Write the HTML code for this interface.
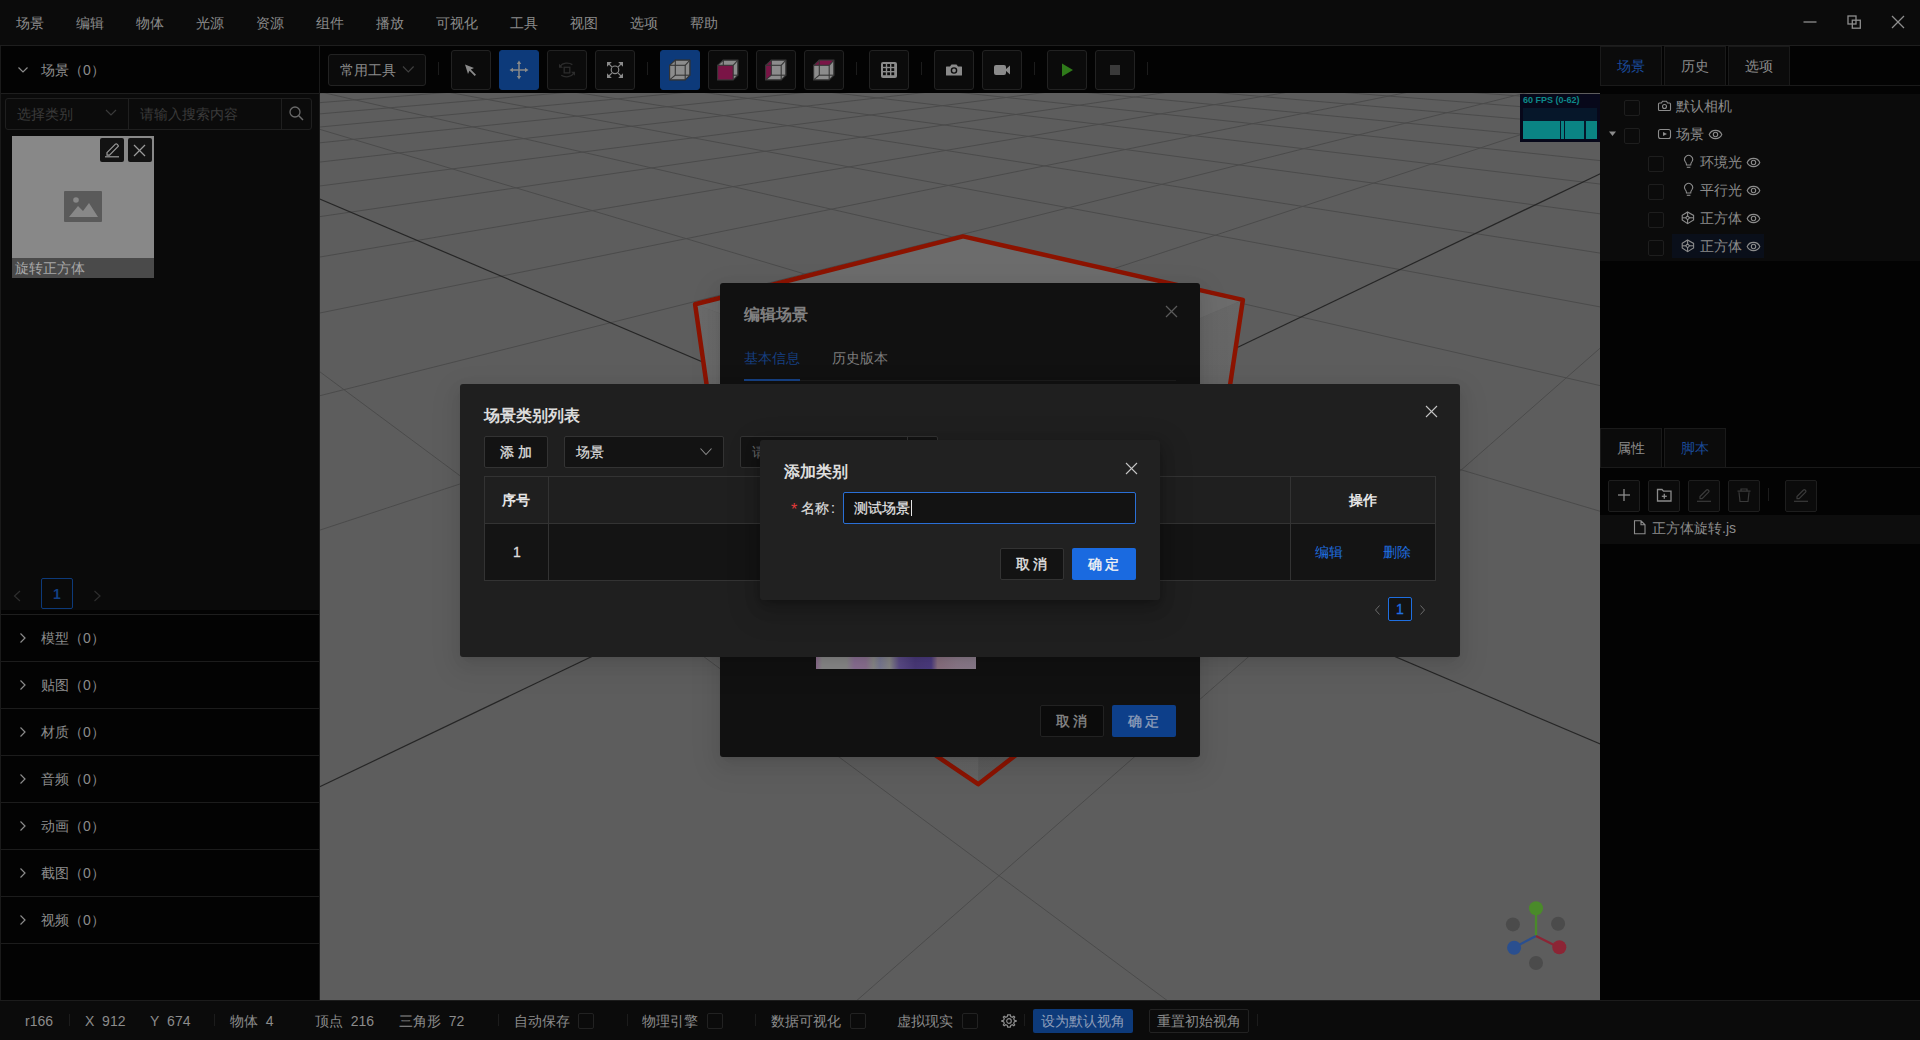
<!DOCTYPE html><html><head><meta charset="utf-8"><style>
*{margin:0;padding:0;box-sizing:border-box}
html,body{width:1920px;height:1040px;overflow:hidden;background:#0b0b0b;font-family:"Liberation Sans",sans-serif;font-size:14px;color:#8c8c8c}
.a{position:absolute}
.t{position:absolute;white-space:nowrap;line-height:16px}
.btn{position:absolute;width:40px;height:40px;top:50px;background:#0b0b0b;border:1px solid #222;border-radius:3px}
.btn svg{position:absolute;left:0;top:0}
.sep{position:absolute;width:1px;height:13px;top:62px;background:#1c1c1c}
.blue{background:#0d3a7a;border-color:#0d3a7a}
</style></head><body>
<div class="a" style="left:0;top:0;width:1920px;height:45px;background:#0b0b0b"></div>
<div class="a" style="left:0;top:45px;width:1920px;height:1px;background:#1e1e1e"></div>
<div class="t" style="left:16px;top:15px">场景</div>
<div class="t" style="left:76px;top:15px">编辑</div>
<div class="t" style="left:136px;top:15px">物体</div>
<div class="t" style="left:196px;top:15px">光源</div>
<div class="t" style="left:256px;top:15px">资源</div>
<div class="t" style="left:316px;top:15px">组件</div>
<div class="t" style="left:376px;top:15px">播放</div>
<div class="t" style="left:436px;top:15px">可视化</div>
<div class="t" style="left:510px;top:15px">工具</div>
<div class="t" style="left:570px;top:15px">视图</div>
<div class="t" style="left:630px;top:15px">选项</div>
<div class="t" style="left:690px;top:15px">帮助</div>
<svg class="a" style="left:1790px;top:0" width="130" height="45"><g stroke="#8e8e8e" stroke-width="1.3" fill="none"><line x1="13.5" y1="22" x2="26.5" y2="22"/><rect x="58" y="16" width="8" height="8"/><rect x="62.3" y="20.2" width="8" height="8"/><line x1="102" y1="16" x2="114" y2="28"/><line x1="114" y1="16" x2="102" y2="28"/></g></svg>
<div class="a" style="left:0;top:46px;width:320px;height:954px;background:#030303;border-left:1px solid #1a1a1a;border-right:1px solid #1a1a1a"></div>
<svg class="a" style="left:0;top:46px" width="40" height="47"><polyline points="18.5,21.5 23,26 27.5,21.5" stroke="#8c8c8c" stroke-width="1.2" fill="none"/></svg>
<div class="t" style="left:41px;top:62px">场景（0）</div>
<div class="a" style="left:1px;top:93px;width:318px;height:1px;background:#1e1e1e"></div>
<div class="a" style="left:1px;top:94px;width:318px;height:520px;background:#0a0a0a"></div>
<div class="a" style="left:5px;top:98px;width:307px;height:32px;border:1px solid #1f1f1f;border-radius:3px;background:#0b0b0b"></div>
<div class="a" style="left:128px;top:99px;width:1px;height:30px;background:#1f1f1f"></div>
<div class="a" style="left:281px;top:99px;width:1px;height:30px;background:#1f1f1f"></div>
<div class="t" style="left:17px;top:106px;color:#3a3a3a">选择类别</div>
<svg class="a" style="left:100px;top:100px" width="24" height="28"><polyline points="6,10 11,15 16,10" stroke="#3a3a3a" stroke-width="1.2" fill="none"/></svg>
<div class="t" style="left:140px;top:106px;color:#3a3a3a">请输入搜索内容</div>
<svg class="a" style="left:282px;top:99px" width="30" height="30"><circle cx="13" cy="13" r="5" stroke="#6a6a6a" stroke-width="1.3" fill="none"/><line x1="16.8" y1="16.8" x2="21" y2="21" stroke="#6a6a6a" stroke-width="1.5"/></svg>
<div class="a" style="left:12px;top:136px;width:142px;height:122px;background:#888"></div>
<div class="a" style="left:12px;top:258px;width:142px;height:20px;background:#4a4a4a"></div>
<div class="t" style="left:15px;top:260px;color:#a8a8a8">旋转正方体</div>
<svg class="a" style="left:64px;top:191px" width="39" height="31"><rect x="0" y="0" width="38" height="31" rx="1" fill="#5a5a5a"/><circle cx="12" cy="9" r="2.8" fill="#888"/><polygon points="5,26 14,15 19,20 25,12 34,26" fill="#888"/></svg>
<div class="a" style="left:100px;top:138px;width:24px;height:24px;background:#131313;border-radius:2px"></div>
<div class="a" style="left:128px;top:138px;width:24px;height:24px;background:#131313;border-radius:2px"></div>
<svg class="a" style="left:100px;top:138px" width="52" height="24"><g stroke="#9a9a9a" stroke-width="1.2" fill="none"><path d="M7,14.6 L15.4,6.2 Q16.2,5.4 17,6.2 L17.9,7.1 Q18.7,7.9 17.9,8.7 L9.5,17.1 L7,17.1 Z"/><line x1="5" y1="18.8" x2="19" y2="18.8"/><line x1="34" y1="7" x2="45" y2="18"/><line x1="45" y1="7" x2="34" y2="18"/></g></svg>
<svg class="a" style="left:8px;top:585px" width="100" height="20"><g stroke="#2e2e2e" stroke-width="1.2" fill="none"><polyline points="12,6 6.5,11 12,16"/><polyline points="86.5,6 92,11 86.5,16"/></g></svg>
<div class="a" style="left:41px;top:578px;width:32px;height:31px;border:1px solid #0d3a7a;border-radius:2px"></div>
<div class="t" style="left:53px;top:586px;color:#123f84;font-weight:bold">1</div>
<div class="a" style="left:1px;top:610px;width:318px;height:4px;background:#030303"></div>
<div class="a" style="left:1px;top:614px;width:318px;height:1px;background:#1e1e1e"></div>
<svg class="a" style="left:0;top:615px" width="40" height="46"><polyline points="20.5,18.5 25,23 20.5,27.5" stroke="#8c8c8c" stroke-width="1.2" fill="none"/></svg>
<div class="t" style="left:41px;top:630px">模型（0）</div>
<div class="a" style="left:1px;top:661px;width:318px;height:1px;background:#1c1c1c"></div>
<svg class="a" style="left:0;top:662px" width="40" height="46"><polyline points="20.5,18.5 25,23 20.5,27.5" stroke="#8c8c8c" stroke-width="1.2" fill="none"/></svg>
<div class="t" style="left:41px;top:677px">贴图（0）</div>
<div class="a" style="left:1px;top:708px;width:318px;height:1px;background:#1c1c1c"></div>
<svg class="a" style="left:0;top:709px" width="40" height="46"><polyline points="20.5,18.5 25,23 20.5,27.5" stroke="#8c8c8c" stroke-width="1.2" fill="none"/></svg>
<div class="t" style="left:41px;top:724px">材质（0）</div>
<div class="a" style="left:1px;top:755px;width:318px;height:1px;background:#1c1c1c"></div>
<svg class="a" style="left:0;top:756px" width="40" height="46"><polyline points="20.5,18.5 25,23 20.5,27.5" stroke="#8c8c8c" stroke-width="1.2" fill="none"/></svg>
<div class="t" style="left:41px;top:771px">音频（0）</div>
<div class="a" style="left:1px;top:802px;width:318px;height:1px;background:#1c1c1c"></div>
<svg class="a" style="left:0;top:803px" width="40" height="46"><polyline points="20.5,18.5 25,23 20.5,27.5" stroke="#8c8c8c" stroke-width="1.2" fill="none"/></svg>
<div class="t" style="left:41px;top:818px">动画（0）</div>
<div class="a" style="left:1px;top:849px;width:318px;height:1px;background:#1c1c1c"></div>
<svg class="a" style="left:0;top:850px" width="40" height="46"><polyline points="20.5,18.5 25,23 20.5,27.5" stroke="#8c8c8c" stroke-width="1.2" fill="none"/></svg>
<div class="t" style="left:41px;top:865px">截图（0）</div>
<div class="a" style="left:1px;top:896px;width:318px;height:1px;background:#1c1c1c"></div>
<svg class="a" style="left:0;top:897px" width="40" height="46"><polyline points="20.5,18.5 25,23 20.5,27.5" stroke="#8c8c8c" stroke-width="1.2" fill="none"/></svg>
<div class="t" style="left:41px;top:912px">视频（0）</div>
<div class="a" style="left:1px;top:943px;width:318px;height:1px;background:#1c1c1c"></div>
<div class="a" style="left:320px;top:46px;width:1280px;height:47px;background:#030303"></div>
<div class="a" style="left:328px;top:54px;width:98px;height:32px;background:#0b0b0b;border:1px solid #222;border-radius:3px"></div>
<div class="t" style="left:340px;top:62px">常用工具</div>
<svg class="a" style="left:396px;top:60px" width="24" height="20"><polyline points="7,6.5 12.3,11.8 17.6,6.5" stroke="#3f3f3f" stroke-width="1.2" fill="none"/></svg>
<div class="sep" style="left:438px"></div>
<div class="sep" style="left:647px"></div>
<div class="sep" style="left:856px"></div>
<div class="sep" style="left:921px"></div>
<div class="sep" style="left:1034px"></div>
<div class="sep" style="left:1147px"></div>
<div class="btn" style="left:451px"><svg width="40" height="40" style="left:-1px;top:-1px"><path d="M14,14.5 L23,18 L19.8,19.5 L25,24.7 L23.7,26 L18.5,20.8 L17,24 Z" fill="#8a8a8a"/></svg></div>
<div class="btn blue" style="left:499px"><svg width="40" height="40" style="left:-1px;top:-1px"><g stroke="#8a8a8a" stroke-width="1.5" fill="#8a8a8a"><line x1="20" y1="12" x2="20" y2="28"/><line x1="12" y1="20" x2="28" y2="20"/></g><g fill="#8a8a8a"><polygon points="20,10.5 17.8,14 22.2,14"/><polygon points="20,29.5 17.8,26 22.2,26"/><polygon points="10.5,20 14,17.8 14,22.2"/><polygon points="29.5,20 26,17.8 26,22.2"/></g></svg></div>
<div class="btn" style="left:547px"><svg width="40" height="40" style="left:-1px;top:-1px"><g stroke="#2c2c2c" stroke-width="1.3" fill="none"><rect x="17.2" y="17.3" width="5.6" height="5.6"/><path d="M13,16.3 A8.5,7 0 0 1 25.4,14.6"/><path d="M14.2,25.2 A8.5,7 0 0 0 27,23.2"/></g><g fill="#2c2c2c"><polygon points="12,13.8 12,17.8 16,17.8"/><polygon points="28,25.8 28,21.8 24,21.8"/></g></svg></div>
<div class="btn" style="left:595px"><svg width="40" height="40" style="left:-1px;top:-1px"><g stroke="#8a8a8a" stroke-width="1.2" fill="none"><circle cx="20" cy="19.8" r="3.8"/><line x1="12.5" y1="12.5" x2="16.8" y2="16.8"/><line x1="27.5" y1="12.5" x2="23.2" y2="16.8"/><line x1="12.5" y1="27.5" x2="16.8" y2="23.2"/><line x1="27.5" y1="27.5" x2="23.2" y2="23.2"/></g><g fill="#8a8a8a"><polygon points="12,12 16.8,12 12,16.8"/><polygon points="28,12 23.2,12 28,16.8"/><polygon points="12,28 16.8,28 12,23.2"/><polygon points="28,28 23.2,28 28,23.2"/></g></svg></div>
<div class="btn blue" style="left:660px"><svg width="40" height="40" style="left:-1px;top:-1px"><polygon points="9.6,15.3 15.3,10.1 29.9,10.1 29.9,25.2 25.2,29.9 9.6,29.9" fill="#8c8c8c" stroke="#2a2a2a" stroke-width="0.6"/><g stroke="#363636" stroke-width="1.1" fill="none"><rect x="15.3" y="10.1" width="14.6" height="15.1"/><line x1="9.6" y1="15.3" x2="15.3" y2="10.1"/><line x1="25.2" y1="15.3" x2="29.9" y2="10.1"/><line x1="9.6" y1="29.9" x2="15.3" y2="25.2"/><line x1="25.2" y1="29.9" x2="29.9" y2="25.2"/></g><rect x="9.6" y="15.3" width="15.6" height="14.6" stroke="#363636" stroke-width="1.1" fill="none"/></svg></div>
<div class="btn" style="left:708px"><svg width="40" height="40" style="left:-1px;top:-1px"><polygon points="9.6,15.3 15.3,10.1 29.9,10.1 29.9,25.2 25.2,29.9 9.6,29.9" fill="#8c8c8c" stroke="#2a2a2a" stroke-width="0.6"/><g stroke="#363636" stroke-width="1.1" fill="none"><rect x="15.3" y="10.1" width="14.6" height="15.1"/><line x1="9.6" y1="15.3" x2="15.3" y2="10.1"/><line x1="25.2" y1="15.3" x2="29.9" y2="10.1"/><line x1="9.6" y1="29.9" x2="15.3" y2="25.2"/><line x1="25.2" y1="29.9" x2="29.9" y2="25.2"/></g><rect x="9.6" y="15.3" width="15.6" height="14.6" fill="#7a1446"/><rect x="9.6" y="15.3" width="15.6" height="14.6" stroke="#363636" stroke-width="1.1" fill="none"/></svg></div>
<div class="btn" style="left:756px"><svg width="40" height="40" style="left:-1px;top:-1px"><polygon points="9.6,15.3 15.3,10.1 29.9,10.1 29.9,25.2 25.2,29.9 9.6,29.9" fill="#8c8c8c" stroke="#2a2a2a" stroke-width="0.6"/><polygon points="9.6,15.3 15.3,10.1 15.3,25.2 9.6,29.9" fill="#7a1446"/><g stroke="#363636" stroke-width="1.1" fill="none"><rect x="15.3" y="10.1" width="14.6" height="15.1"/><line x1="9.6" y1="15.3" x2="15.3" y2="10.1"/><line x1="25.2" y1="15.3" x2="29.9" y2="10.1"/><line x1="9.6" y1="29.9" x2="15.3" y2="25.2"/><line x1="25.2" y1="29.9" x2="29.9" y2="25.2"/></g><rect x="9.6" y="15.3" width="15.6" height="14.6" stroke="#363636" stroke-width="1.1" fill="none"/></svg></div>
<div class="btn" style="left:804px"><svg width="40" height="40" style="left:-1px;top:-1px"><polygon points="9.6,15.3 15.3,10.1 29.9,10.1 29.9,25.2 25.2,29.9 9.6,29.9" fill="#8c8c8c" stroke="#2a2a2a" stroke-width="0.6"/><polygon points="9.6,15.3 15.3,10.1 29.9,10.1 25.2,15.3" fill="#7a1446"/><g stroke="#363636" stroke-width="1.1" fill="none"><rect x="15.3" y="10.1" width="14.6" height="15.1"/><line x1="9.6" y1="15.3" x2="15.3" y2="10.1"/><line x1="25.2" y1="15.3" x2="29.9" y2="10.1"/><line x1="9.6" y1="29.9" x2="15.3" y2="25.2"/><line x1="25.2" y1="29.9" x2="29.9" y2="25.2"/></g><rect x="9.6" y="15.3" width="15.6" height="14.6" stroke="#363636" stroke-width="1.1" fill="none"/></svg></div>
<div class="btn" style="left:869px"><svg width="40" height="40" style="left:-1px;top:-1px"><g transform="translate(-4,0)"><rect x="16" y="12" width="16" height="16" rx="2" fill="#8a8a8a"/><rect x="18.0" y="14.0" width="2.8" height="2.8" fill="#0b0b0b"/><rect x="18.0" y="18.2" width="2.8" height="2.8" fill="#0b0b0b"/><rect x="18.0" y="22.4" width="2.8" height="2.8" fill="#0b0b0b"/><rect x="22.2" y="14.0" width="2.8" height="2.8" fill="#0b0b0b"/><rect x="22.2" y="18.2" width="2.8" height="2.8" fill="#0b0b0b"/><rect x="22.2" y="22.4" width="2.8" height="2.8" fill="#0b0b0b"/><rect x="26.4" y="14.0" width="2.8" height="2.8" fill="#0b0b0b"/><rect x="26.4" y="18.2" width="2.8" height="2.8" fill="#0b0b0b"/><rect x="26.4" y="22.4" width="2.8" height="2.8" fill="#0b0b0b"/></g></svg></div>
<div class="btn" style="left:934px"><svg width="40" height="40" style="left:-1px;top:-1px"><path d="M12.5,16.5 L16,16.5 L17.5,14.5 L22.5,14.5 L24,16.5 L27.5,16.5 Q28,16.5 28,17 L28,25 Q28,25.5 27.5,25.5 L12.5,25.5 Q12,25.5 12,25 L12,17 Q12,16.5 12.5,16.5 Z" fill="#8a8a8a"/><circle cx="20" cy="20.5" r="2.6" fill="none" stroke="#0b0b0b" stroke-width="1.4"/></svg></div>
<div class="btn" style="left:982px"><svg width="40" height="40" style="left:-1px;top:-1px"><rect x="12" y="15" width="12" height="10" rx="2" fill="#8a8a8a"/><polygon points="23.5,19.5 28,15.5 28,24.5 23.5,20.5" fill="#8a8a8a"/></svg></div>
<div class="btn" style="left:1047px"><svg width="40" height="40" style="left:-1px;top:-1px"><polygon points="15,13.5 26,20 15,26.5" fill="#2f7a1a"/></svg></div>
<div class="btn" style="left:1095px"><svg width="40" height="40" style="left:-1px;top:-1px"><rect x="15" y="15" width="10" height="10" fill="#3a3a3a"/></svg></div>
<svg class="a" style="left:320px;top:93px" width="1280" height="907" viewBox="0 0 1280 907"><rect width="1280" height="907" fill="#5d5d5d"/><g stroke="#4b4b4b" stroke-width="1" fill="none"><line x1="613.8" y1="-108.9" x2="-80365.4" y2="1325.8"/><line x1="613.8" y1="-108.9" x2="18915.2" y2="170.0"/><line x1="623.0" y1="-108.8" x2="-191950.6" y2="3356.1"/><line x1="604.6" y1="-108.8" x2="21665.9" y2="217.7"/><line x1="632.3" y1="-108.6" x2="-804797.8" y2="14612.9"/><line x1="595.3" y1="-108.6" x2="25464.2" y2="283.6"/><line x1="641.7" y1="-108.5" x2="-791400.2" y2="14601.8"/><line x1="585.9" y1="-108.4" x2="31049.1" y2="380.5"/><line x1="651.3" y1="-108.4" x2="-778002.5" y2="14590.8"/><line x1="576.3" y1="-108.3" x2="40068.6" y2="537.0"/><line x1="661.1" y1="-108.2" x2="-764604.9" y2="14579.8"/><line x1="566.5" y1="-108.1" x2="57098.2" y2="832.5"/><line x1="671.0" y1="-108.1" x2="-751207.2" y2="14568.7"/><line x1="556.5" y1="-107.9" x2="101330.6" y2="1600.1"/><line x1="681.1" y1="-107.9" x2="-737809.5" y2="14557.7"/><line x1="546.4" y1="-107.7" x2="496546.6" y2="8458.2"/><line x1="691.4" y1="-107.7" x2="-724411.9" y2="14546.6"/><line x1="536.1" y1="-107.5" x2="763348.9" y2="13320.2"/><line x1="701.8" y1="-107.6" x2="-711014.2" y2="14535.6"/><line x1="525.6" y1="-107.4" x2="749293.3" y2="13331.8"/><line x1="712.5" y1="-107.4" x2="-697616.6" y2="14524.5"/><line x1="515.0" y1="-107.2" x2="735237.8" y2="13343.4"/><line x1="723.2" y1="-107.3" x2="-684218.9" y2="14513.5"/><line x1="504.1" y1="-107.0" x2="721182.2" y2="13355.0"/><line x1="734.2" y1="-107.1" x2="-670821.3" y2="14502.4"/><line x1="493.0" y1="-106.8" x2="707126.6" y2="13366.6"/><line x1="745.4" y1="-106.9" x2="-657423.6" y2="14491.4"/><line x1="481.8" y1="-106.6" x2="693071.0" y2="13378.2"/><line x1="756.8" y1="-106.7" x2="-644026.0" y2="14480.4"/><line x1="470.3" y1="-106.4" x2="679015.5" y2="13389.8"/><line x1="768.4" y1="-106.6" x2="-630628.3" y2="14469.3"/><line x1="458.6" y1="-106.2" x2="664959.9" y2="13401.3"/><line x1="780.1" y1="-106.4" x2="-617230.6" y2="14458.3"/><line x1="446.7" y1="-106.0" x2="650904.3" y2="13412.9"/><line x1="792.1" y1="-106.2" x2="-603833.0" y2="14447.2"/><line x1="434.5" y1="-105.7" x2="636848.7" y2="13424.5"/><line x1="804.3" y1="-106.0" x2="-590435.3" y2="14436.2"/><line x1="422.2" y1="-105.5" x2="622793.1" y2="13436.1"/><line x1="816.8" y1="-105.8" x2="-577037.7" y2="14425.1"/><line x1="409.5" y1="-105.3" x2="608737.6" y2="13447.7"/><line x1="829.4" y1="-105.6" x2="-563640.0" y2="14414.1"/><line x1="396.7" y1="-105.1" x2="594682.0" y2="13459.3"/><line x1="842.4" y1="-105.4" x2="-550242.4" y2="14403.1"/><line x1="383.5" y1="-104.8" x2="580626.4" y2="13470.9"/><line x1="855.5" y1="-105.2" x2="-536844.7" y2="14392.0"/><line x1="370.2" y1="-104.6" x2="566570.8" y2="13482.4"/><line x1="868.9" y1="-105.0" x2="-523447.1" y2="14381.0"/><line x1="356.5" y1="-104.4" x2="552515.3" y2="13494.0"/><line x1="882.6" y1="-104.8" x2="-510049.4" y2="14369.9"/><line x1="342.6" y1="-104.1" x2="538459.7" y2="13505.6"/><line x1="896.5" y1="-104.6" x2="-496651.8" y2="14358.9"/><line x1="328.3" y1="-103.9" x2="524404.1" y2="13517.2"/><line x1="910.7" y1="-104.4" x2="-483254.1" y2="14347.8"/><line x1="313.8" y1="-103.6" x2="510348.5" y2="13528.8"/><line x1="925.2" y1="-104.2" x2="-469856.4" y2="14336.8"/><line x1="299.0" y1="-103.3" x2="496293.0" y2="13540.4"/><line x1="940.0" y1="-104.0" x2="-456458.8" y2="14325.7"/><line x1="283.8" y1="-103.1" x2="482237.4" y2="13552.0"/><line x1="955.0" y1="-103.7" x2="-443061.1" y2="14314.7"/><line x1="268.4" y1="-102.8" x2="468181.8" y2="13563.5"/><line x1="970.4" y1="-103.5" x2="-429663.5" y2="14303.7"/><line x1="252.6" y1="-102.5" x2="454126.2" y2="13575.1"/><line x1="986.1" y1="-103.3" x2="-416265.8" y2="14292.6"/><line x1="236.4" y1="-102.2" x2="440070.7" y2="13586.7"/><line x1="1002.2" y1="-103.0" x2="-402868.2" y2="14281.6"/><line x1="219.9" y1="-101.9" x2="426015.1" y2="13598.3"/><line x1="1018.5" y1="-102.8" x2="-389470.5" y2="14270.5"/><line x1="203.0" y1="-101.6" x2="411959.5" y2="13609.9"/><line x1="1035.2" y1="-102.5" x2="-376072.9" y2="14259.5"/><line x1="185.7" y1="-101.3" x2="397903.9" y2="13621.5"/><line x1="1052.3" y1="-102.2" x2="-362675.2" y2="14248.4"/><line x1="168.0" y1="-101.0" x2="383848.4" y2="13633.1"/><line x1="1069.8" y1="-102.0" x2="-349277.5" y2="14237.4"/><line x1="149.9" y1="-100.7" x2="369792.8" y2="13644.7"/><line x1="1087.6" y1="-101.7" x2="-335879.9" y2="14226.4"/><line x1="131.4" y1="-100.4" x2="355737.2" y2="13656.2"/><line x1="1105.9" y1="-101.4" x2="-322482.2" y2="14215.3"/><line x1="112.5" y1="-100.0" x2="341681.6" y2="13667.8"/><line x1="1124.5" y1="-101.1" x2="-309084.6" y2="14204.3"/><line x1="93.1" y1="-99.7" x2="327626.1" y2="13679.4"/><line x1="1143.6" y1="-100.9" x2="-295686.9" y2="14193.2"/><line x1="73.2" y1="-99.3" x2="313570.5" y2="13691.0"/><line x1="1163.1" y1="-100.6" x2="-282289.3" y2="14182.2"/><line x1="52.8" y1="-99.0" x2="299514.9" y2="13702.6"/><line x1="1183.1" y1="-100.2" x2="-268891.6" y2="14171.1"/><line x1="31.9" y1="-98.6" x2="285459.3" y2="13714.2"/><line x1="1203.5" y1="-99.9" x2="-255494.0" y2="14160.1"/><line x1="10.4" y1="-98.2" x2="271403.8" y2="13725.8"/><line x1="1224.4" y1="-99.6" x2="-242096.3" y2="14149.0"/><line x1="-11.5" y1="-97.8" x2="257348.2" y2="13737.3"/><line x1="1245.9" y1="-99.3" x2="-228698.6" y2="14138.0"/><line x1="-34.1" y1="-97.4" x2="243292.6" y2="13748.9"/><line x1="1267.8" y1="-99.0" x2="-215301.0" y2="14127.0"/><line x1="-57.3" y1="-97.0" x2="229237.0" y2="13760.5"/><line x1="1290.3" y1="-98.6" x2="-201903.3" y2="14115.9"/><line x1="-81.0" y1="-96.6" x2="215181.4" y2="13772.1"/><line x1="1313.4" y1="-98.3" x2="-188505.7" y2="14104.9"/><line x1="-105.5" y1="-96.2" x2="201125.9" y2="13783.7"/><line x1="1337.1" y1="-97.9" x2="-175108.0" y2="14093.8"/><line x1="-130.5" y1="-95.7" x2="187070.3" y2="13795.3"/><line x1="1361.3" y1="-97.5" x2="-161710.4" y2="14082.8"/><line x1="-156.3" y1="-95.3" x2="173014.7" y2="13806.9"/><line x1="1386.3" y1="-97.2" x2="-148312.7" y2="14071.7"/><line x1="-182.9" y1="-94.8" x2="158959.1" y2="13818.4"/><line x1="1411.8" y1="-96.8" x2="-134915.1" y2="14060.7"/><line x1="-210.1" y1="-94.3" x2="144903.6" y2="13830.0"/><line x1="1438.1" y1="-96.4" x2="-121517.4" y2="14049.6"/><line x1="-238.2" y1="-93.8" x2="130848.0" y2="13841.6"/><line x1="1465.0" y1="-96.0" x2="-108119.7" y2="14038.6"/><line x1="-267.1" y1="-93.3" x2="116792.4" y2="13853.2"/><line x1="1492.7" y1="-95.5" x2="-94722.1" y2="14027.6"/><line x1="-296.9" y1="-92.8" x2="102736.8" y2="13864.8"/><line x1="1521.2" y1="-95.1" x2="-81324.4" y2="14016.5"/><line x1="-327.6" y1="-92.2" x2="88681.3" y2="13876.4"/><line x1="1550.5" y1="-94.7" x2="-67926.8" y2="14005.5"/><line x1="-359.2" y1="-91.7" x2="74625.7" y2="13888.0"/><line x1="1580.6" y1="-94.2" x2="-54529.1" y2="13994.4"/><line x1="-391.9" y1="-91.1" x2="60570.1" y2="13899.6"/><line x1="1611.6" y1="-93.7" x2="-41131.5" y2="13983.4"/><line x1="-425.5" y1="-90.5" x2="46514.5" y2="13911.1"/><line x1="1676.4" y1="-92.7" x2="-14336.2" y2="13961.3"/><line x1="-496.2" y1="-89.3" x2="18403.4" y2="13934.3"/><line x1="1710.3" y1="-92.2" x2="-938.5" y2="13950.3"/><line x1="-533.3" y1="-88.6" x2="4347.8" y2="13945.9"/><line x1="1745.2" y1="-91.7" x2="12459.1" y2="13939.2"/><line x1="-571.7" y1="-87.9" x2="-9707.8" y2="13957.5"/><line x1="1781.3" y1="-91.1" x2="25856.8" y2="13928.2"/><line x1="-611.4" y1="-87.2" x2="-23763.3" y2="13969.1"/><line x1="1818.5" y1="-90.6" x2="39254.5" y2="13917.1"/><line x1="-652.5" y1="-86.5" x2="-37818.9" y2="13980.7"/><line x1="1856.8" y1="-90.0" x2="52652.1" y2="13906.1"/><line x1="-695.1" y1="-85.7" x2="-51874.5" y2="13992.2"/><line x1="1896.5" y1="-89.4" x2="66049.8" y2="13895.0"/><line x1="-739.3" y1="-85.0" x2="-65930.1" y2="14003.8"/><line x1="1937.5" y1="-88.8" x2="79447.4" y2="13884.0"/><line x1="-785.1" y1="-84.1" x2="-79985.6" y2="14015.4"/><line x1="1979.9" y1="-88.1" x2="92845.1" y2="13872.9"/><line x1="-832.6" y1="-83.3" x2="-94041.2" y2="14027.0"/><line x1="2023.7" y1="-87.4" x2="106242.7" y2="13861.9"/><line x1="-882.0" y1="-82.4" x2="-108096.8" y2="14038.6"/><line x1="2069.1" y1="-86.7" x2="119640.4" y2="13850.9"/><line x1="-933.3" y1="-81.5" x2="-122152.4" y2="14050.2"/><line x1="2116.2" y1="-86.0" x2="133038.0" y2="13839.8"/><line x1="-986.7" y1="-80.6" x2="-136207.9" y2="14061.8"/><line x1="2164.9" y1="-85.3" x2="146435.7" y2="13828.8"/><line x1="-1042.3" y1="-79.6" x2="-150263.5" y2="14073.3"/><line x1="2215.5" y1="-84.5" x2="159833.4" y2="13817.7"/><line x1="-1100.3" y1="-78.6" x2="-164319.1" y2="14084.9"/><line x1="2268.0" y1="-83.7" x2="173231.0" y2="13806.7"/><line x1="-1160.7" y1="-77.5" x2="-178374.7" y2="14096.5"/><line x1="2322.5" y1="-82.9" x2="186628.7" y2="13795.6"/><line x1="-1223.7" y1="-76.4" x2="-192430.3" y2="14108.1"/><line x1="2379.2" y1="-82.0" x2="200026.3" y2="13784.6"/><line x1="-1289.6" y1="-75.2" x2="-206485.8" y2="14119.7"/><line x1="2438.2" y1="-81.1" x2="213424.0" y2="13773.6"/><line x1="-1358.5" y1="-74.0" x2="-220541.4" y2="14131.3"/><line x1="2499.6" y1="-80.2" x2="226821.6" y2="13762.5"/><line x1="-1430.7" y1="-72.7" x2="-234597.0" y2="14142.9"/><line x1="2563.6" y1="-79.2" x2="240219.3" y2="13751.5"/><line x1="-1506.3" y1="-71.4" x2="-248652.6" y2="14154.4"/><line x1="2630.3" y1="-78.2" x2="253616.9" y2="13740.4"/><line x1="-1585.6" y1="-70.0" x2="-262708.1" y2="14166.0"/><line x1="2700.0" y1="-77.1" x2="267014.6" y2="13729.4"/><line x1="-1668.9" y1="-68.5" x2="-276763.7" y2="14177.6"/><line x1="2772.8" y1="-76.0" x2="280412.3" y2="13718.3"/><line x1="-1756.6" y1="-66.9" x2="-290819.3" y2="14189.2"/><line x1="2848.9" y1="-74.9" x2="293809.9" y2="13707.3"/><line x1="-1848.9" y1="-65.3" x2="-304874.9" y2="14200.8"/><line x1="2928.6" y1="-73.7" x2="307207.6" y2="13696.2"/><line x1="-1946.2" y1="-63.6" x2="-318930.4" y2="14212.4"/><line x1="3012.1" y1="-72.4" x2="320605.2" y2="13685.2"/><line x1="-2049.0" y1="-61.7" x2="-332986.0" y2="14224.0"/><line x1="3099.7" y1="-71.0" x2="334002.9" y2="13674.2"/><line x1="-2157.7" y1="-59.8" x2="-347041.6" y2="14235.6"/><line x1="3191.8" y1="-69.6" x2="347400.5" y2="13663.1"/><line x1="-2273.0" y1="-57.8" x2="-361097.2" y2="14247.1"/><line x1="3288.6" y1="-68.2" x2="360798.2" y2="13652.1"/><line x1="-2395.2" y1="-55.6" x2="-375152.7" y2="14258.7"/><line x1="3390.6" y1="-66.6" x2="374195.8" y2="13641.0"/><line x1="-2525.2" y1="-53.3" x2="-389208.3" y2="14270.3"/><line x1="3498.1" y1="-65.0" x2="387593.5" y2="13630.0"/><line x1="-2663.7" y1="-50.9" x2="-403263.9" y2="14281.9"/><line x1="3611.7" y1="-63.2" x2="400991.1" y2="13618.9"/><line x1="-2811.5" y1="-48.2" x2="-417319.5" y2="14293.5"/><line x1="3731.9" y1="-61.4" x2="414388.8" y2="13607.9"/><line x1="-2969.7" y1="-45.4" x2="-431375.0" y2="14305.1"/><line x1="3859.2" y1="-59.5" x2="427786.5" y2="13596.8"/><line x1="-3139.3" y1="-42.4" x2="-445430.6" y2="14316.7"/><line x1="3994.3" y1="-57.4" x2="441184.1" y2="13585.8"/><line x1="-3321.6" y1="-39.2" x2="-459486.2" y2="14328.2"/><line x1="4137.9" y1="-55.2" x2="454581.8" y2="13574.8"/><line x1="-3518.2" y1="-35.7" x2="-473541.8" y2="14339.8"/><line x1="4291.0" y1="-52.9" x2="467979.4" y2="13563.7"/><line x1="-3730.7" y1="-32.0" x2="-487597.3" y2="14351.4"/><line x1="4454.4" y1="-50.4" x2="481377.1" y2="13552.7"/><line x1="-3961.2" y1="-27.9" x2="-501652.9" y2="14363.0"/><line x1="4629.2" y1="-47.7" x2="494774.7" y2="13541.6"/><line x1="-4212.0" y1="-23.4" x2="-515708.5" y2="14374.6"/><line x1="4816.7" y1="-44.9" x2="508172.4" y2="13530.6"/><line x1="-4486.1" y1="-18.6" x2="-529764.1" y2="14386.2"/><line x1="5018.2" y1="-41.8" x2="521570.0" y2="13519.5"/><line x1="-4786.7" y1="-13.2" x2="-543819.6" y2="14397.8"/><line x1="5235.5" y1="-38.5" x2="534967.7" y2="13508.5"/><line x1="-5117.9" y1="-7.4" x2="-557875.2" y2="14409.3"/><line x1="5470.5" y1="-34.9" x2="548365.4" y2="13497.5"/><line x1="-5484.7" y1="-0.9" x2="-571930.8" y2="14420.9"/><line x1="5725.4" y1="-31.0" x2="561763.0" y2="13486.4"/><line x1="-5893.1" y1="6.4" x2="-585986.4" y2="14432.5"/><line x1="6002.8" y1="-26.8" x2="575160.7" y2="13475.4"/><line x1="-6350.6" y1="14.5" x2="-600042.0" y2="14444.1"/><line x1="6305.9" y1="-22.2" x2="588558.3" y2="13464.3"/><line x1="-6866.6" y1="23.6" x2="-614097.5" y2="14455.7"/><line x1="6638.4" y1="-17.1" x2="601956.0" y2="13453.3"/><line x1="-7453.1" y1="34.0" x2="-628153.1" y2="14467.3"/><line x1="7004.8" y1="-11.5" x2="615353.6" y2="13442.2"/><line x1="-8125.7" y1="45.9" x2="-642208.7" y2="14478.9"/><line x1="7410.6" y1="-5.4" x2="628751.3" y2="13431.2"/><line x1="-8904.7" y1="59.7" x2="-656264.3" y2="14490.5"/><line x1="7862.5" y1="1.5" x2="642148.9" y2="13420.1"/><line x1="-9817.6" y1="75.9" x2="-670319.8" y2="14502.0"/><line x1="8368.8" y1="9.3" x2="655546.6" y2="13409.1"/><line x1="-10902.2" y1="95.1" x2="-684375.4" y2="14513.6"/><line x1="8940.0" y1="18.0" x2="668944.3" y2="13398.1"/><line x1="-12211.9" y1="118.3" x2="-698431.0" y2="14525.2"/><line x1="9589.4" y1="27.9" x2="682341.9" y2="13387.0"/><line x1="-13825.0" y1="146.9" x2="-712486.6" y2="14536.8"/><line x1="10334.3" y1="39.2" x2="695739.6" y2="13376.0"/><line x1="-15860.7" y1="182.9" x2="-726542.1" y2="14548.4"/><line x1="11197.3" y1="52.4" x2="709137.2" y2="13364.9"/><line x1="-18509.9" y1="229.9" x2="-740597.7" y2="14560.0"/><line x1="12209.0" y1="67.8" x2="722534.9" y2="13353.9"/><line x1="-22099.4" y1="293.5" x2="-754653.3" y2="14571.6"/><line x1="13411.4" y1="86.1" x2="735932.5" y2="13342.8"/><line x1="-27237.8" y1="384.5" x2="-768708.9" y2="14583.1"/><line x1="14864.1" y1="108.2" x2="749330.2" y2="13331.8"/><line x1="-35203.4" y1="525.6" x2="-782764.4" y2="14594.7"/><line x1="16654.3" y1="135.5" x2="762727.8" y2="13320.8"/><line x1="-49214.8" y1="773.9" x2="-796820.0" y2="14606.3"/><line x1="18915.2" y1="170.0" x2="776125.5" y2="13309.7"/><line x1="-80365.4" y1="1325.8" x2="-810875.6" y2="14617.9"/></g><g stroke="#262626" stroke-width="1.2" fill="none"><line x1="1643.5" y1="-93.2" x2="-27733.8" y2="13972.3"/><line x1="-460.3" y1="-89.9" x2="32459.0" y2="13922.7"/></g><defs><linearGradient id="gz" x1="0" y1="0" x2="0" y2="1"><stop offset="0" stop-color="#6a6a6a"/><stop offset="1" stop-color="#636363"/></linearGradient><linearGradient id="gx" x1="0" y1="0" x2="0" y2="1"><stop offset="0" stop-color="#676767"/><stop offset="1" stop-color="#5b5b5b"/></linearGradient></defs><polygon points="375.1,211.3 662.8,316.8 658.2,691.2 420.7,529.9" fill="url(#gz)"/><polygon points="922.9,206.9 662.8,316.8 658.2,691.2 875.2,523.2" fill="url(#gx)"/><polygon points="643.1,143.4 922.9,206.9 662.8,316.8 375.1,211.3" fill="#6c6c6c"/><polygon points="643.1,143.4 922.9,206.9 875.2,523.2 658.2,691.2 420.7,529.9 375.1,211.3" fill="none" stroke="#8c1300" stroke-width="4.5" stroke-linejoin="round"/><g transform="translate(1216,843)"><circle cx="-23.1" cy="-11.6" r="7" fill="#4b4b4b"/><circle cx="22.1" cy="-12.2" r="7" fill="#4b4b4b"/><circle cx="0" cy="27" r="7" fill="#4b4b4b"/><line x1="0" y1="0" x2="0" y2="-26" stroke="#4a8a2a" stroke-width="2.3"/><line x1="0" y1="0" x2="-20" y2="10.5" stroke="#2a4f8f" stroke-width="2.3"/><line x1="0" y1="0" x2="21" y2="10.5" stroke="#8c2535" stroke-width="2.3"/><circle cx="0" cy="-27.7" r="7" fill="#4a8a2a"/><circle cx="-21.9" cy="11.8" r="7" fill="#2a4f8f"/><circle cx="23.3" cy="11.2" r="7" fill="#8c2535"/></g></svg>
<div class="a" style="left:1520px;top:94px;width:80px;height:48px;background:#07081a"></div>
<div class="t" style="left:1523px;top:95px;font-size:9px;line-height:11px;font-weight:bold;color:#0d8a8a">60 FPS (0-62)</div>
<div class="a" style="left:1523px;top:108px;width:74px;height:31px;background:#06172a"></div>
<div class="a" style="left:1523px;top:121px;width:74px;height:18px;background:#0a8484"></div>
<div class="a" style="left:1560px;top:121px;width:1px;height:18px;background:#06172a"></div>
<div class="a" style="left:1564px;top:121px;width:1px;height:18px;background:#06172a"></div>
<div class="a" style="left:1584px;top:121px;width:1px;height:18px;background:#06172a"></div>
<div class="a" style="left:1585px;top:121px;width:1px;height:18px;background:#06172a"></div>
<div class="a" style="left:1600px;top:46px;width:320px;height:954px;background:#030303"></div>
<div class="a" style="left:1600px;top:46px;width:62px;height:40px;background:#0b0b0b;border:1px solid #1a1a1a;border-bottom:none"></div>
<div class="t" style="left:1617px;top:58px;color:#1a4a9a">场景</div>
<div class="a" style="left:1664px;top:46px;width:62px;height:40px;background:#0b0b0b;border:1px solid #1a1a1a;border-bottom:none"></div>
<div class="t" style="left:1681px;top:58px;color:#8c8c8c">历史</div>
<div class="a" style="left:1728px;top:46px;width:62px;height:40px;background:#0b0b0b;border:1px solid #1a1a1a;border-bottom:none"></div>
<div class="t" style="left:1745px;top:58px;color:#8c8c8c">选项</div>
<div class="a" style="left:1600px;top:85px;width:320px;height:1px;background:#1a1a1a"></div>
<div class="a" style="left:1600px;top:94px;width:320px;height:167px;background:#0b0b0b"></div>
<div class="a" style="left:1624px;top:100px;width:16px;height:16px;border:1px solid #1e1e1e;border-radius:2px;background:#0b0b0b"></div>
<svg class="a" style="left:1657px;top:98px" width="16" height="16"><path d="M2.5,5 L4.5,5 L5.5,3.2 L9.5,3.2 L10.5,5 L12.5,5 Q13.5,5 13.5,6 L13.5,11.5 Q13.5,12.5 12.5,12.5 L2.5,12.5 Q1.5,12.5 1.5,11.5 L1.5,6 Q1.5,5 2.5,5 Z" stroke="#8c8c8c" stroke-width="1.1" fill="none"/><circle cx="7.5" cy="8.5" r="2" stroke="#8c8c8c" stroke-width="1.1" fill="none"/></svg>
<div class="t" style="left:1676px;top:98px">默认相机</div>
<div class="a" style="left:1624px;top:128px;width:16px;height:16px;border:1px solid #1e1e1e;border-radius:2px;background:#0b0b0b"></div>
<svg class="a" style="left:1607px;top:128px" width="12" height="12"><polygon points="2,3.5 9,3.5 5.5,8" fill="#8c8c8c"/></svg>
<svg class="a" style="left:1657px;top:126px" width="16" height="16"><rect x="1.5" y="3.5" width="12" height="9" rx="2" stroke="#8c8c8c" stroke-width="1.1" fill="none"/><polygon points="6,6 10,8 6,10" fill="#8c8c8c"/></svg>
<div class="t" style="left:1676px;top:126px">场景</div>
<svg class="a" style="left:1708px;top:126px" width="16" height="16"><path d="M1.2,8.5 C3.5,3 11.5,3 13.8,8.5 C11.5,14 3.5,14 1.2,8.5 Z" stroke="#8c8c8c" stroke-width="1.1" fill="none"/><circle cx="7.5" cy="8.5" r="2.2" stroke="#8c8c8c" stroke-width="1.1" fill="none"/></svg>
<div class="a" style="left:1648px;top:156px;width:16px;height:16px;border:1px solid #1e1e1e;border-radius:2px;background:#0b0b0b"></div>
<svg class="a" style="left:1681px;top:154px" width="16" height="16"><path d="M5.5,11 Q5.5,9 4.2,7.5 A4,4 0 1 1 11,7.5 Q9.7,9 9.7,11 Z" stroke="#8c8c8c" stroke-width="1.1" fill="none"/><line x1="5.8" y1="13.3" x2="9.4" y2="13.3" stroke="#8c8c8c" stroke-width="1.1"/></svg>
<div class="t" style="left:1700px;top:154px">环境光</div>
<svg class="a" style="left:1746px;top:154px" width="16" height="16"><path d="M1.2,8.5 C3.5,3 11.5,3 13.8,8.5 C11.5,14 3.5,14 1.2,8.5 Z" stroke="#8c8c8c" stroke-width="1.1" fill="none"/><circle cx="7.5" cy="8.5" r="2.2" stroke="#8c8c8c" stroke-width="1.1" fill="none"/></svg>
<div class="a" style="left:1648px;top:184px;width:16px;height:16px;border:1px solid #1e1e1e;border-radius:2px;background:#0b0b0b"></div>
<svg class="a" style="left:1681px;top:182px" width="16" height="16"><path d="M5.5,11 Q5.5,9 4.2,7.5 A4,4 0 1 1 11,7.5 Q9.7,9 9.7,11 Z" stroke="#8c8c8c" stroke-width="1.1" fill="none"/><line x1="5.8" y1="13.3" x2="9.4" y2="13.3" stroke="#8c8c8c" stroke-width="1.1"/></svg>
<div class="t" style="left:1700px;top:182px">平行光</div>
<svg class="a" style="left:1746px;top:182px" width="16" height="16"><path d="M1.2,8.5 C3.5,3 11.5,3 13.8,8.5 C11.5,14 3.5,14 1.2,8.5 Z" stroke="#8c8c8c" stroke-width="1.1" fill="none"/><circle cx="7.5" cy="8.5" r="2.2" stroke="#8c8c8c" stroke-width="1.1" fill="none"/></svg>
<div class="a" style="left:1648px;top:212px;width:16px;height:16px;border:1px solid #1e1e1e;border-radius:2px;background:#0b0b0b"></div>
<svg class="a" style="left:1681px;top:210px" width="16" height="16"><g stroke="#8c8c8c" stroke-width="1.1" fill="none"><polygon points="6.6,2 12.6,5.4 12.6,10 6.6,13.6 1.2,10 1.2,5.4"/><polygon points="6.6,5.8 8.6,7.8 6.6,9.8 4.6,7.8"/><line x1="6.6" y1="2" x2="6.6" y2="5.8"/><line x1="6.6" y1="9.8" x2="6.6" y2="13.6"/><line x1="1.2" y1="7.8" x2="4.6" y2="7.8"/><line x1="8.6" y1="7.8" x2="12.6" y2="7.8"/></g></svg>
<div class="t" style="left:1700px;top:210px">正方体</div>
<svg class="a" style="left:1746px;top:210px" width="16" height="16"><path d="M1.2,8.5 C3.5,3 11.5,3 13.8,8.5 C11.5,14 3.5,14 1.2,8.5 Z" stroke="#8c8c8c" stroke-width="1.1" fill="none"/><circle cx="7.5" cy="8.5" r="2.2" stroke="#8c8c8c" stroke-width="1.1" fill="none"/></svg>
<div class="a" style="left:1672px;top:234px;width:92px;height:24px;background:#0a0f1a"></div>
<div class="a" style="left:1648px;top:240px;width:16px;height:16px;border:1px solid #1e1e1e;border-radius:2px;background:#0b0b0b"></div>
<svg class="a" style="left:1681px;top:238px" width="16" height="16"><g stroke="#8c8c8c" stroke-width="1.1" fill="none"><polygon points="6.6,2 12.6,5.4 12.6,10 6.6,13.6 1.2,10 1.2,5.4"/><polygon points="6.6,5.8 8.6,7.8 6.6,9.8 4.6,7.8"/><line x1="6.6" y1="2" x2="6.6" y2="5.8"/><line x1="6.6" y1="9.8" x2="6.6" y2="13.6"/><line x1="1.2" y1="7.8" x2="4.6" y2="7.8"/><line x1="8.6" y1="7.8" x2="12.6" y2="7.8"/></g></svg>
<div class="t" style="left:1700px;top:238px">正方体</div>
<svg class="a" style="left:1746px;top:238px" width="16" height="16"><path d="M1.2,8.5 C3.5,3 11.5,3 13.8,8.5 C11.5,14 3.5,14 1.2,8.5 Z" stroke="#8c8c8c" stroke-width="1.1" fill="none"/><circle cx="7.5" cy="8.5" r="2.2" stroke="#8c8c8c" stroke-width="1.1" fill="none"/></svg>
<div class="a" style="left:1600px;top:428px;width:62px;height:39px;background:#0b0b0b;border:1px solid #1a1a1a;border-bottom:none"></div>
<div class="t" style="left:1617px;top:440px;color:#8c8c8c">属性</div>
<div class="a" style="left:1664px;top:428px;width:62px;height:39px;background:#0b0b0b;border:1px solid #1a1a1a;border-bottom:none"></div>
<div class="t" style="left:1681px;top:440px;color:#1a4a9a">脚本</div>
<div class="a" style="left:1600px;top:467px;width:320px;height:1px;background:#1a1a1a"></div>
<div class="a" style="left:1600px;top:468px;width:320px;height:47px;background:#030303"></div>
<div class="a" style="left:1608px;top:480px;width:32px;height:32px;background:#0b0b0b;border:1px solid #1e1e1e;border-radius:2px"></div>
<div class="a" style="left:1648px;top:480px;width:32px;height:32px;background:#0b0b0b;border:1px solid #1e1e1e;border-radius:2px"></div>
<div class="a" style="left:1688px;top:480px;width:32px;height:32px;background:#0b0b0b;border:1px solid #1e1e1e;border-radius:2px"></div>
<div class="a" style="left:1728px;top:480px;width:32px;height:32px;background:#0b0b0b;border:1px solid #1e1e1e;border-radius:2px"></div>
<div class="a" style="left:1785px;top:480px;width:32px;height:32px;background:#0b0b0b;border:1px solid #1e1e1e;border-radius:2px"></div>
<div class="a" style="left:1768px;top:488px;width:1px;height:13px;background:#1c1c1c"></div>
<svg class="a" style="left:1600px;top:480px" width="220" height="32"><g stroke="#8c8c8c" stroke-width="1.3" fill="none"><line x1="24" y1="9" x2="24" y2="21"/><line x1="18" y1="15" x2="30" y2="15"/><path d="M57.5,9.5 L62,9.5 L63.5,11.2 L71,11.2 L71,21 L57.5,21 Z"/><line x1="64.3" y1="13.8" x2="64.3" y2="18.8"/><line x1="61.8" y1="16.3" x2="66.8" y2="16.3"/></g><g stroke="#3a3a3a" stroke-width="1.2" fill="none"><path d="M100,16.5 L106.5,10 Q107.3,9.2 108.1,10 L108.6,10.5 Q109.4,11.3 108.6,12.1 L102.1,18.6 L100,18.6 Z"/><line x1="97" y1="21.3" x2="111" y2="21.3"/><path d="M137.5,11.2 L150.5,11.2 M141,11.2 L141,9 L147,9 L147,11.2 M139,12.2 L140,21.5 L148,21.5 L149,12.2"/><path d="M197,16.5 L203.5,10 Q204.3,9.2 205.1,10 L205.6,10.5 Q206.4,11.3 205.6,12.1 L199.1,18.6 L197,18.6 Z"/><line x1="194" y1="21.3" x2="208" y2="21.3"/></g></svg>
<div class="a" style="left:1600px;top:515px;width:320px;height:29px;background:#0d0d0d"></div>
<svg class="a" style="left:1632px;top:519px" width="16" height="18"><path d="M2.5,1.8 L9,1.8 L13,5.8 L13,14.8 L2.5,14.8 Z M9,1.8 L9,5.8 L13,5.8" stroke="#8c8c8c" stroke-width="1.1" fill="none"/></svg>
<div class="t" style="left:1652px;top:520px">正方体旋转.js</div>
<div class="a" style="left:0;top:1000px;width:1920px;height:40px;background:#0b0b0b;border-top:1px solid #1c1c1c"></div>
<div class="t" style="left:25px;top:1013px">r166</div>
<div class="t" style="left:85px;top:1013px">X&nbsp; 912</div>
<div class="t" style="left:150px;top:1013px">Y&nbsp; 674</div>
<div class="t" style="left:230px;top:1013px">物体&nbsp; 4</div>
<div class="t" style="left:315px;top:1013px">顶点&nbsp; 216</div>
<div class="t" style="left:399px;top:1013px">三角形&nbsp; 72</div>
<div class="t" style="left:514px;top:1013px">自动保存</div>
<div class="t" style="left:642px;top:1013px">物理引擎</div>
<div class="t" style="left:771px;top:1013px">数据可视化</div>
<div class="t" style="left:897px;top:1013px">虚拟现实</div>
<div class="a" style="left:69px;top:1014px;width:1px;height:12px;background:#1c1c1c"></div>
<div class="a" style="left:214px;top:1014px;width:1px;height:12px;background:#1c1c1c"></div>
<div class="a" style="left:498px;top:1014px;width:1px;height:12px;background:#1c1c1c"></div>
<div class="a" style="left:627px;top:1014px;width:1px;height:12px;background:#1c1c1c"></div>
<div class="a" style="left:755px;top:1014px;width:1px;height:12px;background:#1c1c1c"></div>
<div class="a" style="left:1024px;top:1014px;width:1px;height:12px;background:#1c1c1c"></div>
<div class="a" style="left:1257px;top:1014px;width:1px;height:12px;background:#1c1c1c"></div>
<div class="a" style="left:578px;top:1013px;width:16px;height:16px;border:1px solid #222;border-radius:2px"></div>
<div class="a" style="left:707px;top:1013px;width:16px;height:16px;border:1px solid #222;border-radius:2px"></div>
<div class="a" style="left:850px;top:1013px;width:16px;height:16px;border:1px solid #222;border-radius:2px"></div>
<div class="a" style="left:962px;top:1013px;width:16px;height:16px;border:1px solid #222;border-radius:2px"></div>
<svg class="a" style="left:1001px;top:1013px" width="16" height="16"><g stroke="#8c8c8c" stroke-width="1.2" fill="none"><circle cx="8" cy="8" r="2.3"/><path d="M8,1.8 L9.3,1.8 L9.7,3.6 L11.3,4.3 L12.8,3.3 L13.7,4.2 L12.7,5.7 L13.4,7.3 L15.2,7.7 L15.2,8.3 L13.4,8.7 L12.7,10.3 L13.7,11.8 L12.8,12.7 L11.3,11.7 L9.7,12.4 L9.3,14.2 L6.7,14.2 L6.3,12.4 L4.7,11.7 L3.2,12.7 L2.3,11.8 L3.3,10.3 L2.6,8.7 L0.8,8.3 L0.8,7.7 L2.6,7.3 L3.3,5.7 L2.3,4.2 L3.2,3.3 L4.7,4.3 L6.3,3.6 L6.7,1.8 Z"/></g></svg>
<div class="a" style="left:1033px;top:1009px;width:100px;height:24px;background:#0d3a7a;border-radius:2px"></div>
<div class="t" style="left:1041px;top:1013px;color:#8c9cb8">设为默认视角</div>
<div class="a" style="left:1149px;top:1009px;width:100px;height:24px;border:1px solid #222;border-radius:2px"></div>
<div class="t" style="left:1157px;top:1013px">重置初始视角</div>
<div class="a" style="left:720px;top:283px;width:480px;height:474px;background:#111;border-radius:3px;box-shadow:0 6px 16px 0 rgba(0,0,0,0.08),0 3px 6px -4px rgba(0,0,0,0.12),0 9px 28px 8px rgba(0,0,0,0.05)"></div>
<div class="t" style="left:744px;top:306px;font-size:16px;font-weight:bold;color:#808080;line-height:18px">编辑场景</div>
<svg class="a" style="left:1164px;top:304px" width="16" height="16"><g stroke="#5a5a5a" stroke-width="1.2"><line x1="2" y1="2" x2="13" y2="13"/><line x1="13" y1="2" x2="2" y2="13"/></g></svg>
<div class="t" style="left:744px;top:350px;color:#163f80">基本信息</div>
<div class="t" style="left:832px;top:350px;color:#7e7e7e">历史版本</div>
<div class="a" style="left:744px;top:380px;width:432px;height:1px;background:#1c1c1c"></div>
<div class="a" style="left:744px;top:379px;width:56px;height:2px;background:#163f80"></div>
<div class="a" style="left:816px;top:657px;width:160px;height:12px;background:linear-gradient(90deg,#8a6a8c 0%,#888 4%,#888 19%,#8a6f94 24%,#8a7090 31%,#888 36%,#7a7a94 40%,#888 46%,#5c4c88 52%,#4a3a7a 62%,#4c3c80 72%,#8a7080 76%,#8c7a8a 88%,#8a7c8c 100%)"></div>
<div class="a" style="left:1040px;top:705px;width:64px;height:32px;background:#0b0b0b;border:1px solid #222;border-radius:2px"></div>
<div class="t" style="left:1056px;top:713px;color:#8a8a8a;letter-spacing:3px;-webkit-text-stroke:0.35px currentColor">取消</div>
<div class="a" style="left:1112px;top:705px;width:64px;height:32px;background:#0d3f8a;border-radius:2px"></div>
<div class="t" style="left:1128px;top:713px;color:#8c9cb8;letter-spacing:3px;-webkit-text-stroke:0.35px currentColor">确定</div>
<div class="a" style="left:460px;top:384px;width:1000px;height:273px;background:#1f1f1f;border-radius:3px;box-shadow:0 6px 16px 0 rgba(0,0,0,0.08),0 3px 6px -4px rgba(0,0,0,0.12),0 9px 28px 8px rgba(0,0,0,0.05)"></div>
<div class="t" style="left:484px;top:407px;font-size:16px;font-weight:bold;color:#dcdcdc;line-height:18px">场景类别列表</div>
<svg class="a" style="left:1424px;top:404px" width="16" height="16"><g stroke="#c4c4c4" stroke-width="1.1"><line x1="2" y1="2" x2="13" y2="13"/><line x1="13" y1="2" x2="2" y2="13"/></g></svg>
<div class="a" style="left:484px;top:436px;width:64px;height:32px;background:#131313;border:1px solid #333;border-radius:2px"></div>
<div class="t" style="left:500px;top:444px;color:#dcdcdc;letter-spacing:4px;-webkit-text-stroke:0.35px currentColor">添加</div>
<div class="a" style="left:564px;top:436px;width:160px;height:32px;background:#131313;border:1px solid #333;border-radius:2px"></div>
<div class="t" style="left:576px;top:444px;color:#dcdcdc;-webkit-text-stroke:0.2px currentColor">场景</div>
<svg class="a" style="left:696px;top:442px" width="20" height="20"><polyline points="4.5,6.5 10,12.5 15.5,6.5" stroke="#8a8a8a" stroke-width="1.1" fill="none"/></svg>
<div class="a" style="left:740px;top:436px;width:198px;height:32px;background:#131313;border:1px solid #333;border-radius:2px"></div>
<div class="a" style="left:907px;top:437px;width:1px;height:30px;background:#333"></div>
<div class="t" style="left:752px;top:444px;color:#6a6a6a">请</div>
<div class="a" style="left:484px;top:476px;width:952px;height:105px;border:1px solid #333;background:#1f1f1f"></div>
<div class="a" style="left:485px;top:524px;width:950px;height:56px;background:#141414"></div>
<div class="a" style="left:485px;top:523px;width:950px;height:1px;background:#333"></div>
<div class="a" style="left:548px;top:477px;width:1px;height:103px;background:#333"></div>
<div class="a" style="left:1290px;top:477px;width:1px;height:103px;background:#333"></div>
<div class="t" style="left:502px;top:492px;color:#e6e6e6;font-weight:bold">序号</div>
<div class="t" style="left:513px;top:544px;color:#dedede;-webkit-text-stroke:0.3px currentColor">1</div>
<div class="t" style="left:1349px;top:492px;color:#e6e6e6;font-weight:bold">操作</div>
<div class="t" style="left:1315px;top:544px;color:#1f6fe0">编辑</div>
<div class="t" style="left:1383px;top:544px;color:#1f6fe0">删除</div>
<svg class="a" style="left:1366px;top:600px" width="66" height="20"><g stroke="#6a6a6a" stroke-width="1" fill="none"><polyline points="13.5,5.5 9.5,10 13.5,14.5"/><polyline points="54.5,5.5 58.5,10 54.5,14.5"/></g></svg>
<div class="a" style="left:1388px;top:597px;width:24px;height:24px;border:1px solid #1f6fe0;border-radius:2px;background:#131313"></div>
<div class="t" style="left:1396px;top:601px;color:#1f6fe0;-webkit-text-stroke:0.3px currentColor">1</div>
<div class="a" style="left:760px;top:440px;width:400px;height:160px;background:#212121;border-radius:3px;box-shadow:0 6px 16px 0 rgba(0,0,0,0.2),0 3px 6px -4px rgba(0,0,0,0.3),0 9px 28px 8px rgba(0,0,0,0.12)"></div>
<div class="t" style="left:784px;top:463px;font-size:16px;font-weight:bold;color:#dedede;line-height:18px">添加类别</div>
<svg class="a" style="left:1124px;top:461px" width="16" height="16"><g stroke="#c4c4c4" stroke-width="1.1"><line x1="2" y1="2" x2="13" y2="13"/><line x1="13" y1="2" x2="2" y2="13"/></g></svg>
<div class="t" style="left:791px;top:502px;color:#e03a3a;font-size:16px">*</div>
<div class="t" style="left:801px;top:500px;color:#dcdcdc;-webkit-text-stroke:0.2px currentColor">名称<span style="margin-left:2px">:</span></div>
<div class="a" style="left:843px;top:492px;width:293px;height:32px;background:#131313;border:1px solid #2a6fd6;border-radius:2px"></div>
<div class="t" style="left:854px;top:500px;color:#e6e6e6;-webkit-text-stroke:0.2px currentColor">测试场景</div>
<div class="a" style="left:911px;top:500px;width:1px;height:16px;background:#e6e6e6"></div>
<div class="a" style="left:1000px;top:548px;width:64px;height:32px;background:#131313;border:1px solid #333;border-radius:2px"></div>
<div class="t" style="left:1016px;top:556px;color:#e6e6e6;letter-spacing:3px;-webkit-text-stroke:0.35px currentColor">取消</div>
<div class="a" style="left:1072px;top:548px;width:64px;height:32px;background:#1a6ae0;border-radius:2px"></div>
<div class="t" style="left:1088px;top:556px;color:#f4f4f4;letter-spacing:3px;-webkit-text-stroke:0.35px currentColor">确定</div>
</body></html>
